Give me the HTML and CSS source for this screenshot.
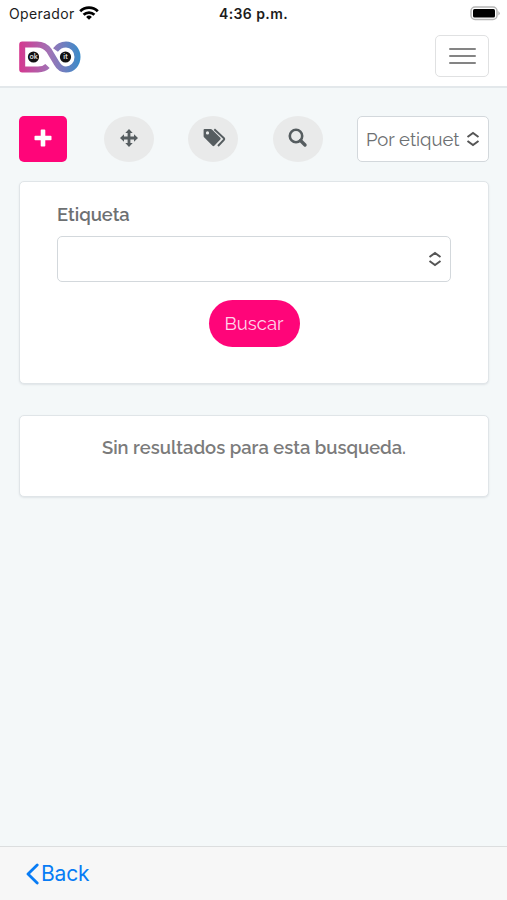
FILE: index.html
```
<!DOCTYPE html>
<html lang="es">
<head>
  <meta charset="UTF-8">
  <meta name="viewport" content="width=device-width, initial-scale=1.0">
  <title>Buscar por etiqueta</title>
  <link rel="stylesheet" href="styles.css">
</head>
<body>
  <div class="status-bar">
    <div class="carrier">
      <span class="carrier-name">Operador</span>
      <svg class="wifi" width="20" height="14" viewBox="0 0 20 14" fill="none" stroke="#000" stroke-width="2.8">
        <path d="M1.2 5.3a12.6 12.6 0 0 1 17.6 0" />
        <path d="M4.6 8.7a7.8 7.8 0 0 1 10.8 0" />
        <path d="M10 13.8 7.1 10.9a4.1 4.1 0 0 1 5.8 0z" fill="#000" stroke="none" />
      </svg>
    </div>
    <span class="clock">4:36 p.m.</span>
    <svg class="battery" width="31" height="15" viewBox="0 0 31 15">
      <rect x="1" y="1" width="26" height="12.500" rx="4" fill="#fff" stroke="#b5b5b5" stroke-width="1.5" />
      <rect x="3" y="3" width="22" height="8.500" rx="1.500" fill="#000" />
      <path d="M28.3 5q3 2.300 0 4.600z" fill="#b5b5b5" />
    </svg>
  </div>

  <header class="navbar">
    <svg class="logo" width="62" height="32" viewBox="0 0 62 32">
      <defs>
        <linearGradient id="brand" gradientUnits="userSpaceOnUse" x1="0" y1="0" x2="62" y2="0">
          <stop offset="0" stop-color="#d5378f" />
          <stop offset="0.5" stop-color="#9f74b6" />
          <stop offset="1" stop-color="#368cca" />
        </linearGradient>
      </defs>
      <g fill="none" stroke="url(#brand)" stroke-width="6">
        <path d="M28.500 25C26 27.500 23 28.500 19 28.500H3.200V3.500H18C23.500 3.500 27 5.500 30 9.500L37.500 22C40 26.500 43 28.500 47 28.500C53.500 28.500 58.500 23 58.500 16S53.500 3.500 47 3.500C42.500 3.500 39 5.500 36.500 9" stroke-linejoin="round" />
      </g>
      <circle cx="14.500" cy="16" r="5.600" fill="#111" />
      <circle cx="46.500" cy="16" r="5.600" fill="#111" />
      <text class="logo-text" x="14.500" y="18.300">ok</text>
      <text class="logo-text" x="46.500" y="18.300">it</text>
    </svg>
    <button type="button" class="menu-button" aria-label="Menu">
      <span></span>
      <span></span>
      <span></span>
    </button>
  </header>

  <main>
    <div class="toolbar">
      <button type="button" class="add-button" aria-label="Agregar">
        <svg width="18" height="18" viewBox="0 0 18 18">
          <path d="M7.500.5h3q.8 0 .8.800V6.700h5.400q.8 0 .8.800v3q0 .8-.8.800H11.300v5.400q0 .8-.8.800h-3q-.8 0-.8-.8V11.300H1.300q-.8 0-.8-.8v-3q0-.8.8-.8H6.700V1.300q0-.8.8-.8z" fill="#fff" />
        </svg>
      </button>
      <button type="button" class="round-button" aria-label="Mover">
        <svg width="18" height="18" viewBox="0 0 18 18" fill="#565d60">
          <path d="M9 0 12.700 4H10.400V7.600H14V5.300L18 9 14 12.700V10.400H10.400V14H12.700L9 18 5.300 14H7.600V10.400H4V12.700L0 9 4 5.300V7.600H7.600V4H5.300z" />
        </svg>
      </button>
      <button type="button" class="round-button tags-button" aria-label="Etiquetas">
        <svg width="24" height="20" viewBox="0 0 24 20">
          <path d="M1.500 1H7.500Q8.500 1 9.200 1.700L17.300 9.800Q18.200 10.700 17.300 11.600L11.300 17.800Q10.400 18.700 9.500 17.800L1.300 9.600Q.6 8.900.6 7.900V2Q.6 1 1.500 1zM4.500 3.300a1.600 1.600 0 1 0 0 3.200 1.600 1.600 0 0 0 0-3.200z" fill="#565d60" fill-rule="evenodd" />
          <path d="M11.300 1.200 20.700 10Q21.800 11 20.700 12L15 18" fill="none" stroke="#565d60" stroke-width="1.900" />
        </svg>
      </button>
      <button type="button" class="round-button" aria-label="Buscar">
        <svg width="20" height="20" viewBox="0 0 20 20" fill="none" stroke="#565d60">
          <circle cx="8" cy="8" r="6.200" stroke-width="2.600" />
          <path d="M12.500 12.500 17 17" stroke-width="3.400" stroke-linecap="round" />
        </svg>
      </button>
      <div class="select filter-select">
        <span>Por etiquet</span>
        <svg width="14" height="16" viewBox="0 0 14 16">
          <path d="M1.500 6 7 2 12.500 6M1.500 10 7 14 12.500 10" />
        </svg>
      </div>
    </div>

    <form class="card search-card">
      <label class="label">Etiqueta</label>
      <div class="select tag-select">
        <svg width="14" height="16" viewBox="0 0 14 16">
          <path d="M1.500 6 7 2 12.500 6M1.500 10 7 14 12.500 10" />
        </svg>
      </div>
      <button type="button" class="search-button">Buscar</button>
    </form>

    <div class="card results-card">
      <p>Sin resultados para esta busqueda.</p>
    </div>
  </main>

  <footer class="bottom-bar">
    <a class="back">
      <svg width="13" height="22" viewBox="0 0 13 22">
        <path d="M11.200 2 2 11 11.200 20" fill="none" stroke="#087cf5" stroke-width="2.800" stroke-linecap="round" stroke-linejoin="round" />
      </svg>
      <span>Back</span>
    </a>
  </footer>
</body>
</html>
```
FILE: styles.css
```
* {
  box-sizing: border-box;
}

body {
  display: flex;
  flex-direction: column;
  height: 100vh;
  margin: 0;
  background-color: #f4f8f9;
  color: #6d7072;
  font-family: Raleway, Lato, sans-serif;
  font-size: 18.5px;
  overflow: hidden;
}

button {
  border: none;
  padding: 0;
  font: inherit;
}

svg {
  display: block;
}



.status-bar {
  display: grid;
  grid-template-columns: 1fr auto 1fr;
  align-items: center;
  height: 27px;
  padding: 0 6px 0 9px;
  background-color: #fff;
  color: #1c1c1c;
  font-family: Inter, sans-serif;
  font-size: 14px;
}

.carrier {
  display: flex;
  align-items: center;
  gap: 4px;
}

.carrier-name {
  letter-spacing: 0.35px;
}

.wifi {
  margin-bottom: 2px;
}

.clock {
  margin-right: 3px;
  font-weight: 600;
  letter-spacing: 0.4px;
}

.battery {
  justify-self: end;
}



.navbar {
  display: flex;
  justify-content: space-between;
  align-items: center;
  height: 61px;
  padding: 0 18px 2px 19px;
  background-color: #fff;
  border-bottom: 2px solid #e3e8eb;
}

.logo {
  margin-top: 2px;
}

.logo-text {
  fill: #ddd;
  font-family: Inter, sans-serif;
  font-size: 7px;
  font-weight: 600;
  text-anchor: middle;
}

.menu-button {
  display: flex;
  flex-direction: column;
  align-items: center;
  justify-content: center;
  gap: 5px;
  width: 54px;
  height: 42px;
  border: 1px solid #e0e1e2;
  border-radius: 5px;
  background-color: #fff;
}

.menu-button span {
  width: 27px;
  height: 2px;
  border-radius: 1px;
  background-color: #848484;
}



main {
  flex: 1;
  padding: 28px 18px 0 19px;
}

.toolbar {
  display: flex;
  justify-content: space-between;
  height: 46px;
  margin-bottom: 19px;
}

.toolbar button {
  display: flex;
  align-items: center;
  justify-content: center;
  padding-bottom: 2px;
}

.add-button {
  width: 48px;
  margin-right: 2px;
  border-radius: 5px;
  background-color: #ff0579;
}

.round-button {
  width: 50px;
  border-radius: 50%;
  background-color: #e9eaea;
}

.toolbar .tags-button {
  padding-left: 3px;
}

.select {
  display: flex;
  align-items: center;
  justify-content: space-between;
  height: 46px;
  padding: 0 8px;
  border: 1px solid #d3d8dc;
  border-radius: 5px;
  background-color: #fff;
}

.select svg {
  fill: none;
  stroke: #555;
  stroke-width: 2;
}

.filter-select {
  width: 132px;
  white-space: nowrap;
}

.tag-select {
  justify-content: flex-end;
  width: 100%;
}



.card {
  border: 1px solid #e0e5e8;
  border-radius: 5px;
  background-color: #fff;
  box-shadow: 0 1px 2px #dfe4e7;
}

.search-card {
  display: flex;
  flex-direction: column;
  align-items: center;
  height: 203px;
  margin-bottom: 31px;
  padding: 21px 37px 0;
}

.label {
  align-self: flex-start;
  margin-bottom: 9px;
  font-size: 18.35px;
  font-weight: 600;
  line-height: 24px;
}

.search-button {
  width: 91px;
  height: 47px;
  margin-top: 18px;
  border-radius: 24px;
  background-color: #ff0579;
  color: #ffd5ea;
}

.results-card {
  height: 82px;
  padding-top: 20px;
  text-align: center;
}

.results-card p {
  margin: 0;
  color: #7b7b7b;
  font-size: 18.35px;
  font-weight: 600;
  line-height: 24px;
}



.bottom-bar {
  display: flex;
  height: 54px;
  padding: 0 26px;
  border-top: 1px solid #dcdedf;
  background-color: #f7f7f7;
}

.back {
  display: flex;
  align-items: center;
  gap: 2px;
  color: #087cf5;
  font-family: Inter, sans-serif;
  font-size: 21px;
  letter-spacing: -0.2px;
}
```
